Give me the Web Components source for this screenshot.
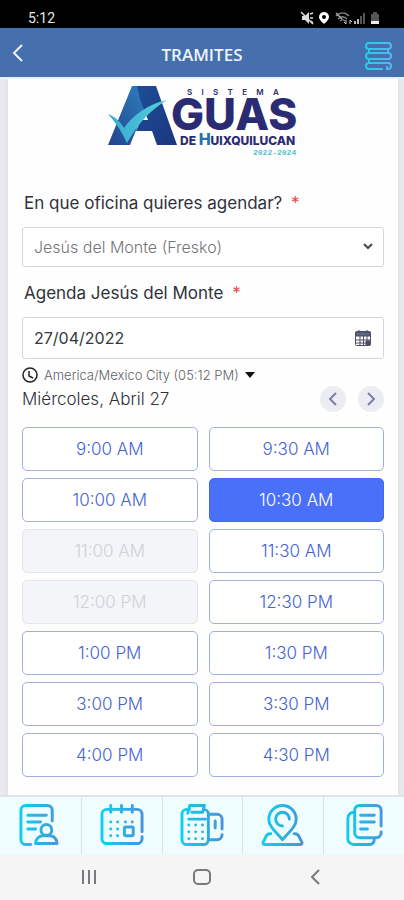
<!DOCTYPE html>
<html lang="es">
<head>
<meta charset="utf-8">
<meta name="viewport" content="width=device-width, initial-scale=1">
<title>Tramites</title>
<style>
  body {
    margin: 0;
    font-family: Inter, Roboto, sans-serif;
    color: #2f323b;
  }
</style>
</head>
<body>
<tramites-app>
  <status-bar slot="top" time="5:12"></status-bar>
  <app-header slot="top">TRAMITES</app-header>
  <aguas-logo></aguas-logo>
  <office-field>En que oficina quieres agendar?</office-field>
  <date-field value="27/04/2022">Agenda Jesús del Monte</date-field>
  <slot-picker zone="America/Mexico City (05:12 PM)" selected="10:30 AM">Miércoles, Abril 27</slot-picker>
  <tab-bar slot="bottom"></tab-bar>
  <system-nav slot="bottom"></system-nav>
</tramites-app>

<script>
  // Base class: every element clones its markup into an open root
  class BaseElement extends HTMLElement {
    constructor() {
      super()
      this.attachShadow({ mode: 'open' }).innerHTML = this.template()
    }
  }

  window.customElements.define('tramites-app', class extends BaseElement {
    template() {
      return `
        <style>
          :host {
            display: flex;
            flex-direction: column;
            min-height: 100vh;
            background: #e9eaf0;
          }
          main {
            flex: 1;
            box-sizing: border-box;
            margin: 0 6px 0 8px;
            padding: 7px 14px 16px;
            background: #fefefe;
            box-shadow: 0 0 4px #d6d8e0;
          }
          .top {
            position: relative;
            border-bottom: 2px solid #e3f3fd;
          }
        </style>
        <div class="top"><slot name="top"></slot></div>
        <main><slot></slot></main>
        <slot name="bottom"></slot>
      `
    }
  })

  window.customElements.define('status-bar', class extends BaseElement {
    template() {
      return `
        <style>
          :host {
            display: flex;
            align-items: flex-end;
            justify-content: space-between;
            box-sizing: border-box;
            height: 28px;
            padding: 0 24px 2px 28px;
            background: #000;
            color: #e8e8e8;
            font: 400 14px/16px Roboto, sans-serif;
          }
        </style>
        <span>${this.getAttribute('time')}</span>
        <svg width="80" height="15" viewBox="0 0 80 15" aria-hidden="true">
          <path d="M2 5h3l4-4v12l-4-4H2z" fill="#ddd"/>
          <path d="M1 1l12 12M10 3l3-1M10 7h3M11 10l2 2" stroke="#ddd" stroke-width="1.5"/>
          <path d="M24 1a5 5 0 0 0-5 5c0 3 5 7 5 7s5-4 5-7a5 5 0 0 0-5-5z" fill="#fff"/>
          <circle cx="24" cy="6" r="2" fill="#000"/>
          <g fill="none" stroke="#888" stroke-width="1.5">
            <path d="M36 5c4-4 9-4 13 0M38 8c3-3 6-3 9 0M40 10c2-2 3-2 5 0"/>
            <path d="M36 2l6 6" stroke="#aaa"/>
          </g>
          <path d="M46 9v4l-2-2M50 13V9l2 2" fill="none" stroke="#ccc"/>
          <path d="M55 10v3M58 8v5" stroke="#bbb" stroke-width="2"/>
          <path d="M61 5v8M64 2v11" stroke="#555" stroke-width="2"/>
          <path d="M73 1h4v2h2v7h-8V3h2z" fill="#555"/>
          <path d="M71 10h8v3h-8z" fill="#eee"/>
        </svg>
      `
    }
  })

  window.customElements.define('app-header', class extends BaseElement {
    template() {
      return `
        <style>
          :host {
            display: flex;
            align-items: center;
            justify-content: space-between;
            height: 49px;
            padding: 0 12px;
            background: #456fad;
            color: #eef4fc;
          }
          h1 {
            margin: 0;
            padding-top: 4px;
            font: 600 17px/24px "Open Sans", sans-serif;
          }
          button {
            display: flex;
            width: 30px;
            padding: 0;
            border: none;
            background: none;
          }
          .menu {
            justify-content: flex-end;
            padding-top: 6px;
          }
        </style>
        <button aria-label="Regresar">
          <svg width="12" height="18" viewBox="0 0 12 18" fill="none" stroke="#eef4fc" stroke-width="2"><path d="M10 1L2 9l8 8"/></svg>
        </button>
        <h1><slot></slot></h1>
        <button class="menu" aria-label="Menú">
          <svg width="28" height="28" viewBox="0 0 28 28" fill="none" stroke="url(#m)" stroke-width="2" stroke-linecap="round">
            <defs>
              <linearGradient id="m" gradientUnits="userSpaceOnUse" x1="0" y1="0" x2="28" y2="0">
                <stop offset="0" stop-color="#1fd0e8"/>
                <stop offset="1" stop-color="#59b4f5"/>
              </linearGradient>
            </defs>
            <rect x="2" y="1" width="25" height="6" rx="3"/>
            <rect x="2" y="11" width="25" height="6" rx="3"/>
            <path d="M5 7v4M24 7v4M5 17v4M18 27H5a3 3 0 0 1 0-6h19a3 3 0 0 1 3 3 3 3 0 0 1-3 3h-1v-2"/>
          </svg>
        </button>
      `
    }
  })

  window.customElements.define('aguas-logo', class extends BaseElement {
    template() {
      return `
        <style>
          :host {
            display: flex;
            justify-content: center;
            margin-bottom: 33px;
          }
          text {
            font-family: Inter, sans-serif;
            fill: #2a2b72;
          }
        </style>
        <svg width="192" height="72" viewBox="0 0 192 72" role="img" aria-label="Sistema Aguas de Huixquilucan">
          <defs>
            <linearGradient id="left" x1="1" y1="0" x2="0" y2="1">
              <stop offset="0" stop-color="#2f86c4"/>
              <stop offset="1" stop-color="#23428c"/>
            </linearGradient>
            <linearGradient id="right" x1="0" y1="0" x2="1" y2="1">
              <stop offset="0" stop-color="#1c4e96"/>
              <stop offset="1" stop-color="#1e3580"/>
            </linearGradient>
            <linearGradient id="check" x1="0" y1="0" x2="1" y2="0">
              <stop offset="0" stop-color="#35abcf"/>
              <stop offset="1" stop-color="#55cfdc"/>
            </linearGradient>
            <linearGradient id="h" x1="0" y1="0" x2="1" y2="0">
              <stop offset="0.150" stop-color="#35abcf"/>
              <stop offset="0.200" stop-color="#2a2b72"/>
            </linearGradient>
          </defs>
          <path d="M25 0h22L23 59H1z" fill="url(#left)"/>
          <path d="M30 0h19l21 59H50l-5-14H29l5-11h7L33 13z" fill="url(#right)"/>
          <path d="M1 28c6 2 13 8 16 14 9-13 24-24 43-28-17 10-30 25-40 43C15 46 9 37 1 28z" fill="url(#check)"/>
          <text x="80" y="9" font-size="8" font-weight="600">S&emsp;&thinsp;I&emsp;&thinsp;S&emsp;&thinsp;T&emsp;&thinsp;E&emsp;&thinsp;M&emsp;&thinsp;A</text>
          <text x="64" y="44" font-size="44" font-weight="800">GUAS</text>
          <text x="73" y="59" font-size="12" font-weight="800">DE <tspan font-size="16" fill="#1f77a8">H</tspan>UIXQUILUCAN</text>
          <text x="146" y="69" font-size="8" font-weight="700" style="fill:#55bfd0; font-family:'Liberation Mono',monospace">2022-2024</text>
        </svg>
      `
    }
  })

  // Styles shared by the two form fields
  const fieldStyle = `
    :host {
      display: block;
    }
    label {
      display: block;
      padding-left: 2px;
      font-size: 17px;
      line-height: 24px;
    }
    .required {
      margin-left: 4px;
      color: #e5484d;
    }
    .box {
      display: grid;
      align-items: center;
      margin-top: 12px;
    }
    .box > * {
      grid-area: 1 / 1;
    }
    select, input {
      box-sizing: border-box;
      width: 100%;
      height: 40px;
      padding: 0 11px;
      border: 1px solid #d5d6da;
      border-radius: 3px;
      background: #fff;
      color: #74767a;
      font: 300 16px Inter, sans-serif;
      appearance: none;
    }
    .box svg {
      justify-self: end;
      pointer-events: none;
    }
  `

  window.customElements.define('office-field', class extends BaseElement {
    template() {
      return `
        <style>
          ${fieldStyle}
          :host {
            margin-bottom: 14px;
          }
          .box svg {
            margin-right: 10px;
          }
        </style>
        <label for="office"><slot></slot> <span class="required">*</span></label>
        <div class="box">
          <select id="office"><option>Jesús del Monte (Fresko)</option></select>
          <svg width="12" height="8" viewBox="0 0 12 8" fill="none" stroke="#45484e" stroke-width="2"><path d="M2 1l4 4 4-4"/></svg>
        </div>
      `
    }
  })

  window.customElements.define('date-field', class extends BaseElement {
    template() {
      return `
        <style>
          ${fieldStyle}
          :host {
            margin-bottom: 7px;
          }
          input {
            height: 42px;
            color: #34373e;
            font-weight: 400;
          }
          .box svg {
            margin-right: 12px;
          }
        </style>
        <label for="date"><slot></slot> <span class="required">*</span></label>
        <div class="box">
          <input id="date" type="text" value="${this.getAttribute('value')}">
          <svg width="18" height="18" viewBox="0 0 18 18" fill="none" stroke="#4a4f68">
            <rect x="1.500" y="2.500" width="15" height="14" rx="1"/>
            <path d="M2 3h14v4H2z" fill="#5f6480"/>
            <path d="M5 1v3M13 1v3M2 11h14M2 14h14M6 7v9M9.500 7v9M13 7v9"/>
            <path d="M12 12h4v4h-4z" fill="#4a4f68"/>
          </svg>
        </div>
      `
    }
  })

  const times = [
    '9:00 AM', '9:30 AM', '10:00 AM', '10:30 AM', '11:00 AM', '11:30 AM', '12:00 PM',
    '12:30 PM', '1:00 PM', '1:30 PM', '3:00 PM', '3:30 PM', '4:00 PM', '4:30 PM'
  ]
  const taken = [ '11:00 AM', '12:00 PM' ]

  window.customElements.define('slot-picker', class extends BaseElement {
    template() {
      const selected = this.getAttribute('selected')
      const buttons = times.map(time => `
        <button class="time" aria-pressed="${time === selected}" ${taken.includes(time) ? 'disabled' : ''}>${time}</button>
      `).join('')

      return `
        <style>
          :host {
            display: block;
          }
          button {
            padding: 0;
            border: none;
            background: none;
            font-family: inherit;
          }
          .zone {
            display: flex;
            align-items: center;
            gap: 6px;
            height: 18px;
            color: #5f6269;
            font-size: 13px;
            font-weight: 300;
          }
          .day {
            display: flex;
            align-items: center;
            gap: 12px;
            height: 26px;
            margin: 2px 0 15px;
          }
          h2 {
            flex: 1;
            margin: 0;
            font-size: 17px;
            font-weight: 300;
          }
          .arrow {
            display: flex;
            align-items: center;
            justify-content: center;
            width: 26px;
            height: 26px;
            border-radius: 50%;
            background: #ececf3;
          }
          .times {
            display: grid;
            grid-template-columns: 1fr 1fr;
            gap: 7px 11px;
          }
          .time {
            height: 44px;
            border: 1px solid #9fb0dc;
            border-radius: 5px;
            background: #fff;
            color: #4463d3;
            font-size: 17px;
            font-weight: 300;
          }
          .time[aria-pressed="true"] {
            border-color: #4168f0;
            background: #4a6ff8;
            color: #fff;
          }
          .time:disabled {
            border-color: #e2e5e9;
            background: #f3f5f8;
            color: #cfd2d7;
          }
        </style>
        <button class="zone">
          <svg width="16" height="16" viewBox="0 0 16 16" fill="none" stroke="#222" stroke-width="1.500"><circle cx="8" cy="8" r="7"/><path d="M7 4v5l4 2"/></svg>
          <span>${this.getAttribute('zone')}</span>
          <svg width="10" height="6" viewBox="0 0 10 6"><path d="M0 0h10L5 6z" fill="#111"/></svg>
        </button>
        <div class="day">
          <h2><slot></slot></h2>
          <button class="arrow" aria-label="Día anterior">
            <svg width="8" height="14" viewBox="0 0 8 14" fill="none" stroke="#7d7fa6" stroke-width="2"><path d="M7 1L1 7l6 6"/></svg>
          </button>
          <button class="arrow" aria-label="Día siguiente">
            <svg width="8" height="14" viewBox="0 0 8 14" fill="none" stroke="#7d7fa6" stroke-width="2"><path d="M1 1l6 6-6 6"/></svg>
          </button>
        </div>
        <div class="times">${buttons}</div>
      `
    }
  })

  // Tab icons, drawn on a 44x44 grid
  const tabs = [
    {
      label: 'Trámites',
      icon: '<path d="M13 42H8a5 5 0 0 1-5-5V7a5 5 0 0 1 5-5h22a5 5 0 0 1 5 5v11M10 12h19M10 19h13M10 26h8"/><circle cx="29" cy="27" r="5.500"/><path d="M18 41c0-5 4-8 7-8h8c4 0 7 4 7 8z"/>'
    },
    {
      label: 'Citas',
      icon: '<path d="M43 34v2a5 5 0 0 1-5 5H7a5 5 0 0 1-5-5V11a5 5 0 0 1 5-5h31a5 5 0 0 1 5 5v18M11 2v7M22 2v7M33 2v7"/><rect x="25" y="24" width="9" height="9" rx="1"/><path d="M11 19h0M18 19h0M26 19h0M33 19h0M11 26h0M18 26h0M11 33h0M18 33h0"/>'
    },
    {
      label: 'Pagos',
      icon: '<path d="M10 6H7a5 5 0 0 0-5 5v26a5 5 0 0 0 5 5h17a5 5 0 0 0 5-5V11a5 5 0 0 0-5-5M8 10l2-8h15l-2 7H12M9 16h17M31 11h7a5 5 0 0 1 5 5v10M31 37h7a5 5 0 0 0 5-5M36 18v7"/><path d="M9 22h0M16 22h0M23 22h0M9 29h0M16 29h0M23 29h0M9 36h0M16 36h0M23 36h0"/>'
    },
    {
      label: 'Ubicación',
      icon: '<path d="M22 37C14 28 8 23 8 16a14 14 0 0 1 28 0c0 7-6 12-14 21zM22 23a7 7 0 1 1 7-7M10 31H9c-2 0-3 1-4 3l-3 6c0 1 0 2 2 2h36c2 0 2-1 2-2l-3-6c-1-2-2-3-4-3h-1"/>'
    },
    {
      label: 'Documentos',
      icon: '<path d="M40 29v1a5 5 0 0 1-5 5H18a5 5 0 0 1-5-5V7a5 5 0 0 1 5-5h17a5 5 0 0 1 5 5v16M13 9h-1a6 6 0 0 0-6 6v21a6 6 0 0 0 6 6h16c3 0 5-2 5-6M19 12h14M19 19h14M19 26h7"/>'
    }
  ]

  window.customElements.define('tab-bar', class extends BaseElement {
    template() {
      return `
        <style>
          :host {
            display: block;
            border-top: 2px solid #dfe4e8;
            background: #effdfe;
          }
          nav {
            display: grid;
            grid-template-columns: repeat(5, 1fr);
          }
          button {
            display: flex;
            align-items: center;
            justify-content: center;
            height: 57px;
            padding: 0 0 2px;
            border: none;
            border-left: 1px solid #d5e5e9;
            background: none;
          }
          button:first-child {
            border-left: none;
          }
        </style>
        <nav>
          ${tabs.map((tab, i) => `
            <button aria-label="${tab.label}">
              <svg width="44" height="44" viewBox="0 0 45 44" fill="none" stroke="url(#t${i})" stroke-width="3" stroke-linecap="round" stroke-linejoin="round">
                <defs>
                  <linearGradient id="t${i}" gradientUnits="userSpaceOnUse" x1="0" y1="22" x2="44" y2="22">
                    <stop offset="0" stop-color="#0bd3ee"/>
                    <stop offset="1" stop-color="#4a92de"/>
                  </linearGradient>
                </defs>
                ${tab.icon}
              </svg>
            </button>
          `).join('')}
        </nav>
      `
    }
  })

  window.customElements.define('system-nav', class extends BaseElement {
    template() {
      return `
        <style>
          :host {
            display: flex;
            align-items: center;
            justify-content: space-around;
            height: 46px;
            padding: 0 32px;
            background: #f5f5f5;
          }
          button {
            display: flex;
            padding: 0;
            border: none;
            background: none;
          }
          svg {
            fill: none;
            stroke: #77797c;
            stroke-width: 2;
          }
        </style>
        <button aria-label="Recientes"><svg width="18" height="18" viewBox="0 0 18 18"><path d="M3 2v14M9 2v14M15 2v14"/></svg></button>
        <button aria-label="Inicio"><svg width="18" height="18" viewBox="0 0 18 18"><rect x="1" y="2" width="16" height="14" rx="4"/></svg></button>
        <button aria-label="Atrás"><svg width="18" height="18" viewBox="0 0 18 18"><path d="M13 2L6 9l7 7"/></svg></button>
      `
    }
  })
</script>
</body>
</html>
